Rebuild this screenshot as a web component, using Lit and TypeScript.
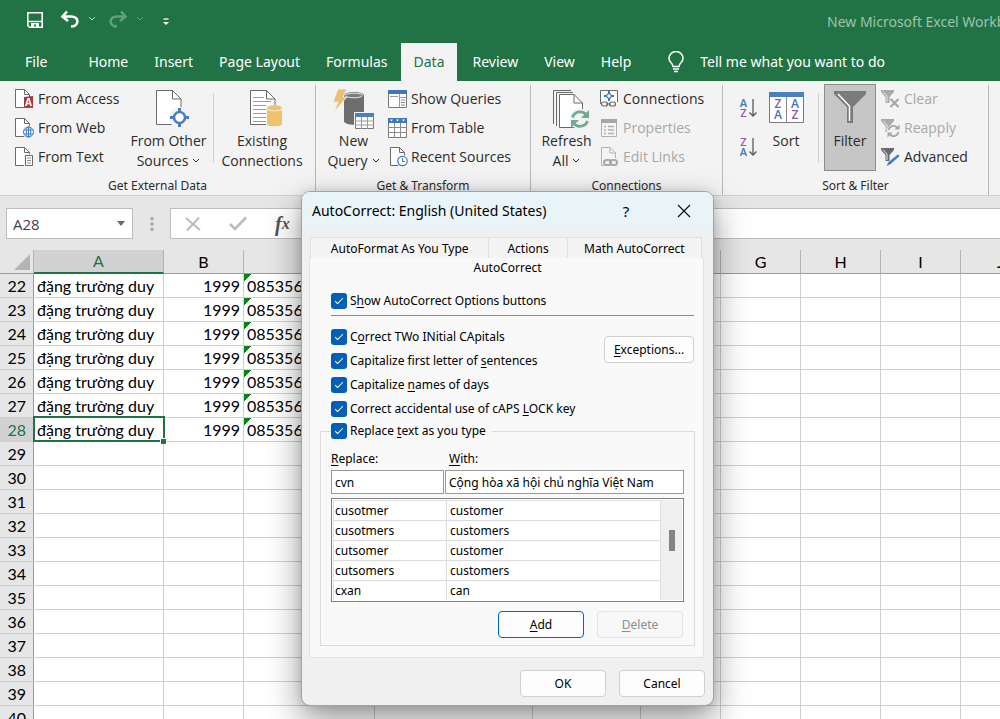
import { LitElement, html, svg, css, nothing } from "lit";
import { customElement } from "lit/decorators.js";
import { classMap } from "lit/directives/class-map.js";

/* ---------- icons ---------- */

const smallDoc = (stroke = "#6a6a6a") => svg`
  <path d="M.5 .5H9.5L14.500 5.500V18.500H.5z" fill="#fff" stroke=${stroke}/>
  <path d="M9.500 .5V5.500H14.500" fill="none" stroke=${stroke}/>`;

const bigDoc = svg`
  <path d="M.5 .5H16.500L25 9V34.500H.5z" fill="#fff" stroke="#6a6a6a"/>
  <path d="M16.500 .5V9H25" fill="none" stroke="#6a6a6a"/>`;

const small = (body: unknown) => html`<svg class="icon" width="19" height="20" viewBox="0 0 19 20" aria-hidden="true">${body}</svg>`;
const big = (w: number, body: unknown) => html`<svg class="icon" width=${w} height="40" viewBox="0 0 ${w} 40" aria-hidden="true">${body}</svg>`;

const funnel = (fill: string, shine: string) => svg`
  <path d="M0 1H13V3L8.500 8V14H4.500V8L0 3z" fill=${fill}/>
  <path d="M2 2.500L6 7V13" fill="none" stroke=${shine}/>`;

const icons = {
  access: small(svg`${smallDoc()}<path d="M9 8L18 7V19L9 18z" fill="#a4373a"/>
    <text x="13.500" y="16.500" font-size="10" font-weight="700" text-anchor="middle" fill="#fff">A</text>`),
  web: small(svg`${smallDoc()}<circle cx="13.500" cy="14" r="6.200" fill="#f3f3f3"/>
    <g fill="none" stroke="#3e7cc0"><circle cx="13.500" cy="14" r="5" fill="#fff"/>
    <ellipse cx="13.500" cy="14" rx="2.200" ry="5"/><path d="M9 12H18M9 16H18M13.500 9V19"/></g>`),
  text: small(svg`${smallDoc()}<path d="M9 7H19V20H9z" fill="#f3f3f3"/><path d="M10.500 8.500H17.500V18.500H10.500z" fill="#fff" stroke="#6a6a6a"/>
    <path d="M12 11H16M12 13.500H16M12 16H16" stroke="#8a8a8a"/>`),
  other: big(25, svg`${bigDoc}<circle cx="23.500" cy="27.500" r="10.500" fill="#f3f3f3"/>
    <circle cx="23.500" cy="27.500" r="5.500" fill="#fff" stroke="#4a80bd" stroke-width="2.600"/>
    <path d="M23.500 18V22M23.500 33V37M14 27.500H18M29 27.500H33" stroke="#4a80bd" stroke-width="3"/>`),
  existing: big(25, svg`${bigDoc}<path d="M3 7.500H14M3 11.500H21M3 15.500H21M3 19.500H16M3 23.500H16M3 27.500H16M3 31.500H16" stroke="#9a9a9a"/>
    <path d="M16 15H33V39H16z" fill="#f3f3f3"/>
    <path d="M17 18V34C17 37 32 37 32 34V18z" fill="#eec36f"/><ellipse cx="24.500" cy="18" rx="7.500" ry="2.800" fill="#eec36f"/>
    <path d="M17 18.500C18 21.500 31 21.500 32 18.500" fill="none" stroke="#fbe9c4" stroke-width="1.200"/>`),
  query: big(42, svg`<path d="M11 5V31C11 36 31 36 31 31V5z" fill="#6e6e6e"/><ellipse cx="21" cy="5.500" rx="10" ry="3.500" fill="#6e6e6e"/>
    <ellipse cx="21" cy="5.500" rx="8.500" ry="2.300" fill="#7d7d7d" stroke="#e8e8e8"/>
    <path d="M5 -1H14L10 7H14L1 22L5 12H0z" fill="#ecbf77" stroke="#f3f3f3" stroke-width=".8"/>
    <path d="M21 22H42V40H21z" fill="#f3f3f3"/><path d="M22.500 23.500H40.500V38.500H22.500z" fill="#fff" stroke="#7a7a7a"/>
    <path d="M22 23H41V27H22z" fill="#4a80bd"/><path d="M22 31H41M22 35H41M28.500 27V39M34.500 27V39" stroke="#9a9a9a"/>`),
  show: small(svg`<path d="M.5 1.500H18.500V18.500H.5z" fill="#fff" stroke="#7a7a7a"/><path d="M0 1H19V5H0z" fill="#3f77b8"/>
    <path d="M11.500 5V18M11.500 8.500H18M2 7.500H10" stroke="#9a9a9a"/><path d="M13 11H17M13 13.500H17M13 16H17" stroke="#8a8a8a"/>`),
  table: small(svg`<path d="M.5 .5H18.500V19.500H.5z" fill="#fff" stroke="#7a7a7a"/><path d="M0 0H19V5H0z" fill="#3f77b8"/>
    <path d="M2 1.500H5L3.500 3.500zM8 1.500H11L9.500 3.500zM14 1.500H17L15.500 3.500z" fill="#fff"/>
    <path d="M0 9.500H19M0 14.500H19M6.500 5V20M12.500 5V20" stroke="#8a8a8a"/>`),
  recent: small(svg`<g transform="translate(2 0)">${smallDoc()}</g><circle cx="14.500" cy="14" r="6" fill="#f3f3f3"/>
    <circle cx="14.500" cy="14" r="4.700" fill="#fff" stroke="#3f77b8" stroke-width="1.200"/><path d="M14.500 11V14.500H17" fill="none" stroke="#3f77b8"/>`),
  refresh: big(28, svg`<path d="M.5 34V.5H18" fill="none" stroke="#6a6a6a"/><path d="M3.500 36V2.500H20" fill="none" stroke="#6a6a6a"/>
    <path d="M6.500 4.500H21L29.500 13V37.500H6.500z" fill="#fff" stroke="#6a6a6a"/><path d="M21 4.500V13H29.500" fill="none" stroke="#6a6a6a"/>
    <circle cx="27" cy="29" r="10.500" fill="#f3f3f3"/>
    <g fill="none" stroke="#6fab90" stroke-width="2.800"><path d="M19.500 27.500A8 8 0 0 1 33.500 25"/><path d="M34.500 31A8 8 0 0 1 20.500 33"/></g>
    <path d="M36 20V28H28zM18 38V30H26z" fill="#6fab90"/>`),
  connections: small(svg`<path d="M.5 1.500H17.500V14.500H.5z" fill="#fff" stroke="#6a6a6a"/>
    <path d="M9 2V12M4 7H14" stroke="#3f77b8" stroke-width="2"/><path d="M9 4L12 7L9 10L6 7z" fill="#fff" stroke="#3f77b8" stroke-width="1.200"/>
    <path d="M1 13H18V19H1z" fill="#f3f3f3"/><rect x="1.500" y="13" width="6" height="4" rx="2" fill="none" stroke="#6a6a6a" stroke-width="1.200"/>
    <rect x="9.500" y="13" width="6" height="4" rx="2" fill="none" stroke="#6a6a6a" stroke-width="1.200"/><path d="M6 15H11" stroke="#6a6a6a"/>`),
  properties: small(svg`<path d="M1.500 1.500H16.500V18.500H1.500z" fill="#f6f3f6" stroke="#b5aeb3"/><path d="M1 1H17V5H1z" fill="#aaa3a8"/>
    <path d="M4 8.500H6M4 12H6M4 15.500H6M8 8.500H14M8 12H14M8 15.500H14" stroke="#b5aeb3" stroke-width="1.500"/>`),
  links: small(svg`<path d="M4.500 18.500H1.500V.5H10L15.500 6V11" fill="#f6f3f6" stroke="#b5b0b4"/><path d="M10 .5V6H15.500" fill="none" stroke="#b5b0b4"/>
    <g fill="none" stroke="#aaa6a9" stroke-width="2"><rect x="4" y="13" width="7" height="5" rx="2.500"/><rect x="10" y="13" width="7" height="5" rx="2.500"/></g>`),
  filter: big(32, svg`<path d="M0 2H32V5L19 18V34H13V18L0 5z" fill="#7b7b7b"/><path d="M4 5L15.500 17V32" fill="none" stroke="#fff" stroke-width="1.500"/>`),
  clear: small(svg`${funnel("#aaa", "#e8e8e8")}<path d="M9.500 10L17.500 18M17.500 10L9.500 18" stroke="#a6a6a6" stroke-width="2.200"/>`),
  reapply: small(svg`${funnel("#aaa", "#e8e8e8")}<circle cx="12.500" cy="13" r="6.500" fill="#f3f3f3"/>
    <g fill="none" stroke="#a6a6a6" stroke-width="1.800"><path d="M7.500 12A5 5 0 0 1 16 9.500"/><path d="M17.500 14A5 5 0 0 1 9 16.500"/></g>
    <path d="M18.500 6.500V11.500H13.500zM6.500 19.500V14.500H11.500z" fill="#a6a6a6"/>`),
  advanced: small(svg`${funnel("#6a6a6a", "#e8e8e8")}<path d="M17 7L19 9L9.500 17.500L5 19.500L7 15z" fill="#3f7cc0" stroke="#f3f3f3" stroke-width=".7"/>`),
};

const sortGlyph = (top: string, bottom: string) => html`
  <svg class="icon" width="19" height="24" viewBox="0 0 19 24" aria-hidden="true">
    <text x="4.500" y="10" font-size="11" font-weight="600" text-anchor="middle" fill=${top === "A" ? "#3f77b8" : "#8e58ab"}>${top}</text>
    <text x="4.500" y="20" font-size="11" font-weight="600" text-anchor="middle" fill=${bottom === "A" ? "#3f77b8" : "#8e58ab"}>${bottom}</text>
    <path d="M14 2V19M10.500 15.500L14 19L17.500 15.500" fill="none" stroke="#5a5a5a" stroke-width="1.300"/>
  </svg>`;

const sortBig = big(35, svg`<path d="M.5 2.500H34.500V32.500H.5z" fill="#fff" stroke="#7a7a7a"/><path d="M0 2H35V7H0z" fill="#4a80bd"/>
  <path d="M17.500 7V32" stroke="#8a8a8a"/>
  <g font-size="12" font-weight="600" text-anchor="middle"><text x="9" y="18" fill="#8e58ab">Z</text><text x="9" y="29" fill="#3f77b8">A</text>
  <text x="26" y="18" fill="#3f77b8">A</text><text x="26" y="29" fill="#8e58ab">Z</text></g>`);

const chevron = html`<svg class="chevron" width="8" height="6" viewBox="0 0 8 6" aria-hidden="true"><path d="M1 1L4 4L7 1" fill="none" stroke="currentColor"/></svg>`;

/* ---------- ribbon ---------- */

@customElement("excel-ribbon")
export class ExcelRibbon extends LitElement {
  static styles = css`
    :host { display: block; font: 14px/20px "Open Sans", "Noto Sans", sans-serif; color: #2b2b2b; }
    button { font: inherit; color: inherit; background: none; border: 0; padding: 0; margin: 0; white-space: nowrap; }
    .icon { display: block; flex: none; overflow: visible; }
    .green { background: #217346; color: #fff; font-family: "Noto Sans", "Open Sans", sans-serif; }
    .quick { display: flex; align-items: center; height: 43px; overflow: hidden; }
    .quick button { display: flex; }
    .tools { display: flex; align-items: center; flex: 1; padding: 0 0 3px 27px; }
    .tools .drop { padding: 0 13px 0 5px; opacity: .7; }
    .tools .off { opacity: .3; }
    .tools .more { margin: 3px 0 0 6px; }
    .title { flex: none; width: 173px; color: #9cc4ac; white-space: nowrap; }
    .tabs { display: flex; height: 38px; padding-left: 12px; }
    .tab { padding: 0 13px; }
    .tab.file { margin-right: 15px; }
    .tab.active { background: #f3f3f3; color: #217346; margin-right: 2px; }
    .tell { display: flex; align-items: center; gap: 16px; padding-left: 24px; }
    .body { display: flex; height: 114px; background: #f3f3f3; border-bottom: 1px solid #cfcfcf; }
    .group { flex: none; display: flex; flex-direction: column; justify-content: space-between; margin-top: 4px; border-right: 1px solid #b9b9b9; }
    .row { display: flex; align-items: flex-start; }
    .caption { font: 12px/18px "Noto Sans", sans-serif; text-align: center; }
    .list { display: flex; flex-direction: column; margin-top: -1px; }
    .item { display: flex; align-items: center; gap: 4px; height: 29px; text-align: left; }
    .item:disabled { color: #a8a8a8; }
    .tall { display: flex; flex-direction: column; align-items: center; padding-top: 5px; }
    .tall .label { padding-top: 1px; }
    .chevron { padding: 0 0 2px 4px; }
    .rule { width: 1px; height: 70px; margin-top: 8px; background: #cfcfcf; }
    .w-other { width: 89px; }
    .w-exist { width: 96px; }
    .w-query { width: 69px; }
    .w-refresh { width: 67px; }
    .w-sort { width: 48px; }
    .external { width: 315px; }
    .external .list { padding-left: 15px; width: 109px; }
    .transform { width: 214px; }
    .transform .row { padding-left: 3px; }
    .connect { width: 191px; }
    .connect .row { padding-left: 2px; }
    .sort { width: 265px; }
    .sort .row { padding-left: 16px; }
    .pair { display: flex; flex-direction: column; gap: 15px; padding: 12px 4px 0 0; }
    .sort .rule { margin-left: 8px; }
    .filter { box-sizing: border-box; width: 52px; height: 87px; margin: -1px 5px 0; padding-top: 4px; background: #c6c6c6; border: 1px solid #8c8c8c; }
    .filter .label { padding-top: 2px; }
  `;

  private item(icon: unknown, text: string, disabled = false) {
    return html`<button class="item" ?disabled=${disabled}>${icon}<span>${text}</span></button>`;
  }

  private tall(icon: unknown, cls: string, one: string, two: string | null = null, drop = false) {
    return html`<button class="tall ${cls}">${icon}<span class="label">${one}${two ? html`<br />${two}` : nothing}${drop ? chevron : nothing}</span></button>`;
  }

  render() {
    return html`
      <header class="green">
        <div class="quick">
          <div class="tools">
            <button aria-label="Save"><svg width="16" height="16" viewBox="0 0 16 16"><path d="M.8 .8H15.200V15.200H2.500L.8 13.500z" fill="none" stroke="#fff" stroke-width="1.600"/><path d="M1 9.500H15" stroke="#fff" stroke-width="1.400"/><path d="M4 11H12V15H9V12.500H7V15H4z" fill="#fff"/></svg></button>
            <button aria-label="Undo"><svg class="icon" width="36" height="18" viewBox="-18 0 36 18"><path d="M6 .5L1.500 5.500L7 10M2 5.500H10C19 5.500 18 15.500 10 15.500" fill="none" stroke="#fff" stroke-width="2.600"/></svg></button>
            <button aria-label="Undo list" class="drop">${chevron}</button>
            <button aria-label="Redo" class="off"><svg width="18" height="18" viewBox="0 0 18 18"><path d="M12 .5L16.500 5.500L11 10M16 5.500H8C-1 5.500 0 15.500 8 15.500" fill="none" stroke="#fff" stroke-width="2.600"/></svg></button>
            <button aria-label="Redo list" class="drop off">${chevron}</button>
            <button aria-label="Customize Quick Access Toolbar" class="more"><svg width="6" height="8" viewBox="0 0 6 8"><path d="M.5 1H5.500" stroke="#fff" stroke-width="1.300"/><path d="M0 4H6L3 7z" fill="#fff"/></svg></button>
          </div>
          <div class="title">New Microsoft Excel Workbook</div>
        </div>
        <nav class="tabs">
          ${["File", "Home", "Insert", "Page Layout", "Formulas", "Data", "Review", "View", "Help"].map(
            (t) => html`<button class=${classMap({ tab: true, file: t === "File", active: t === "Data" })}>${t}</button>`
          )}
          <button class="tell">
            <svg width="16" height="22" viewBox="0 0 16 22" aria-hidden="true"><path d="M5 15.500C5 12 1 11.500 1 7.500A7 7 0 0 1 15 7.500C15 11.500 11 12 11 15.500z" fill="none" stroke="#fff" stroke-width="1.500"/><path d="M5 18H11M6 20.500H10" stroke="#fff" stroke-width="1.500"/></svg>
            <span>Tell me what you want to do</span>
          </button>
        </nav>
      </header>
      <div class="body">
        <section class="group external">
          <div class="row">
            <div class="list">${this.item(icons.access, "From Access")}${this.item(icons.web, "From Web")}${this.item(icons.text, "From Text")}</div>
            ${this.tall(icons.other, "w-other", "From Other", "Sources", true)}
            <div class="rule"></div>
            ${this.tall(icons.existing, "w-exist", "Existing", "Connections")}
          </div>
          <div class="caption">Get External Data</div>
        </section>
        <section class="group transform">
          <div class="row">
            ${this.tall(icons.query, "w-query", "New", "Query", true)}
            <div class="list">${this.item(icons.show, "Show Queries")}${this.item(icons.table, "From Table")}${this.item(icons.recent, "Recent Sources")}</div>
          </div>
          <div class="caption">Get &amp; Transform</div>
        </section>
        <section class="group connect">
          <div class="row">
            ${this.tall(icons.refresh, "w-refresh", "Refresh", "All", true)}
            <div class="list">${this.item(icons.connections, "Connections")}${this.item(icons.properties, "Properties", true)}${this.item(icons.links, "Edit Links", true)}</div>
          </div>
          <div class="caption">Connections</div>
        </section>
        <section class="group sort">
          <div class="row">
            <div class="pair">
              <button aria-label="Sort A to Z">${sortGlyph("A", "Z")}</button>
              <button aria-label="Sort Z to A">${sortGlyph("Z", "A")}</button>
            </div>
            ${this.tall(sortBig, "w-sort", "Sort")}
            <div class="rule"></div>
            ${this.tall(icons.filter, "filter", "Filter")}
            <div class="list">${this.item(icons.clear, "Clear", true)}${this.item(icons.reapply, "Reapply", true)}${this.item(icons.advanced, "Advanced")}</div>
          </div>
          <div class="caption">Sort &amp; Filter</div>
        </section>
      </div>`;
  }
}

/* ---------- formula bar and grid ---------- */

const columns = [
  { name: "A", width: 130 }, { name: "B", width: 80 }, { name: "C", width: 131 }, { name: "D", width: 158 }, { name: "E", width: 108 },
  { name: "F", width: 80 }, { name: "G", width: 80 }, { name: "H", width: 80 }, { name: "I", width: 80 }, { name: "J", width: 80 },
];
const rows = Array.from({ length: 19 }, (_, i) => 22 + i);
const filled = ["đặng trường duy", "1999", "0853567"];

@customElement("excel-sheet")
export class ExcelSheet extends LitElement {
  static styles = css`
    :host { display: block; flex: 1; min-height: 0; overflow: hidden; background: #e6e6e6; color: #000; }
    .bar { display: flex; height: 31px; padding: 12px 0 11px 6px; }
    .name { box-sizing: border-box; display: flex; align-items: center; width: 127px; background: #fff; border: 1px solid #bdbdbd; }
    input { font: 15px/20px "Open Sans", "Noto Sans", sans-serif; color: #444; border: 0; background: none; min-width: 0; flex: 1; padding: 0 6px; outline: 0; }
    button { border: 0; background: none; padding: 0; display: flex; }
    .name button { padding-right: 7px; }
    .dots { width: 37px; display: flex; align-items: center; justify-content: center; }
    .formula { flex: 1; display: flex; align-items: center; background: #fff; border: solid #bdbdbd; border-width: 1px 0 1px 1px; padding-left: 14px; gap: 28px; }
    .fx { font: italic 700 20px/20px "Liberation Serif", serif; color: #555; }
    .fx small { font-size: 16px; }
    table { border-collapse: separate; border-spacing: 0; table-layout: fixed; width: 1041px; font: 16px/23px Lato, "Noto Sans", sans-serif; }
    .numbers { width: 34px; }
    th, td { padding: 0; height: 23px; white-space: nowrap; overflow: hidden; font-weight: 400; border: solid #cfcfcf; border-width: 0 1px 1px 0; }
    td { background: #fff; }
    thead th { border-color: #9b9b9b; border-right-color: #b4b4b4; }
    tbody th { background: #e6e6e6; border-right-color: #9b9b9b; text-align: right; padding-right: 7px; font-size: 16px; }
    .corner svg { display: block; margin-left: auto; padding: 0 3px 0 0; }
    thead .picked { background: #d2d2d2; color: #217346; border-bottom: 2px solid #217346; height: 22px; line-height: 22px; }
    tbody .picked { background: #d2d2d2; color: #217346; }
    .word { padding-left: 3px; }
    .num { text-align: right; padding-right: 3px; }
    .flag { padding-left: 3px; background: linear-gradient(135deg, #11801c 5px, transparent 5px) #fff; }
    .current { position: relative; overflow: visible; }
    .current::before { content: ""; position: absolute; inset: -2px -2px -1px -1px; border: 2px solid #217346; }
    .current::after { content: ""; position: absolute; right: -3px; bottom: -3px; width: 5px; height: 5px; background: #217346; border: solid #fff; border-width: 1px 0 0 1px; }
  `;

  render() {
    return html`
      <div class="bar">
        <div class="name">
          <input aria-label="Name Box" .value=${"A28"} />
          <button aria-label="Name list"><svg width="8" height="5" viewBox="0 0 8 5"><path d="M0 0H8L4 5z" fill="#6a6a6a"/></svg></button>
        </div>
        <div class="dots"><svg width="4" height="14" viewBox="0 0 4 14"><path d="M.5 0H3.500V3H.5zM.5 5.500H3.500V8.500H.5zM.5 11H3.500V14H.5z" fill="#a8a8a8"/></svg></div>
        <div class="formula">
          <button aria-label="Cancel"><svg width="16" height="16" viewBox="0 0 16 16"><path d="M1 2L15 14M14 1.500L2 14.500" stroke="#bcbcbc" stroke-width="2"/></svg></button>
          <button aria-label="Enter"><svg width="18" height="16" viewBox="0 0 18 16"><path d="M1 8L6 13L17 1.500" fill="none" stroke="#bcbcbc" stroke-width="2.600"/></svg></button>
          <button class="fx" aria-label="Insert Function">f<small>x</small></button>
          <input aria-label="Formula" />
        </div>
      </div>
      <table>
        <colgroup><col class="numbers" />${columns.map((c) => html`<col style="width:${c.width}px" />`)}</colgroup>
        <thead>
          <tr>
            <th class="corner"><svg width="16" height="16" viewBox="0 0 16 16"><path d="M16 0V16H0z" fill="#b4b4b4"/></svg></th>
            ${columns.map((c) => html`<th class=${classMap({ picked: c.name === "A" })}>${c.name}</th>`)}
          </tr>
        </thead>
        <tbody>
          ${rows.map((r) => {
            const has = r <= 28;
            return html`<tr>
              <th class=${classMap({ picked: r === 28 })}>${r}</th>
              ${columns.map((_, i) => html`<td class=${classMap({ word: has && i === 0, num: has && i === 1, flag: has && i === 2, current: r === 28 && i === 0 })}>${has ? filled[i] : nothing}</td>`)}
            </tr>`;
          })}
        </tbody>
      </table>`;
  }
}

/* ---------- AutoCorrect dialog ---------- */

const pairs = [["cusotmer", "customer"], ["cusotmers", "customers"], ["cutsomer", "customer"], ["cutsomers", "customers"], ["cxan", "can"]];

@customElement("autocorrect-dialog")
export class AutocorrectDialog extends LitElement {
  static styles = css`
    :host { box-sizing: border-box; display: block; width: 413px; border: 1px solid #a3a3a3; border-radius: 9px; background: #f0f0f0; overflow: hidden;
      box-shadow: 0 14px 34px rgba(0, 0, 0, .42), 0 0 10px rgba(0, 0, 0, .12); font: 12px/18px "Noto Sans", "Open Sans", sans-serif; color: #000; }
    button { font: inherit; color: inherit; }
    u { text-underline-offset: 2px; }
    .head { display: flex; align-items: center; height: 37px; background: #e9f4f8; padding-left: 10px; }
    .head h1 { flex: 1; margin: 0; font-size: 14px; font-weight: 400; }
    .head button { display: flex; justify-content: center; width: 58px; border: 0; background: none; padding: 0; font-size: 15px; }
    .content { padding: 8px 8px 8px 7px; }
    .tabs { display: grid; grid-template-columns: 179fr 78fr 134fr; margin: 0 3px 0 1px; height: 20px; }
    .tabs button { background: #f4f4f4; border: solid #e0e0e0; border-width: 1px 1px 0 0; padding: 2px 0 0; white-space: nowrap; }
    .tabs button:first-child { border-left-width: 1px; }
    .page { background: #f9f9f9; border: 1px solid #e2e2e2; margin-right: 1px; padding: 0 8px 11px 10px; }
    .current { display: block; width: 100%; border: 0; background: none; padding: 0; line-height: 20px; }
    .inner { padding: 0 1px 0 11px; }
    .check { display: flex; align-items: center; gap: 3px; height: 24px; }
    .check input { appearance: none; flex: none; display: grid; place-items: center; width: 16px; height: 16px; margin: 0; border-radius: 3px; background: #005fb8; }
    .check input::before { content: ""; width: 7px; height: 3px; margin-top: -3px; border: solid #fff; border-width: 0 0 1px 1px; transform: rotate(-45deg); }
    .first { margin-top: 11px; padding-bottom: 2px; border-bottom: 1px solid #8c8c8c; margin-bottom: 9px; }
    .options { display: flex; justify-content: space-between; }
    .push { box-sizing: border-box; width: 86px; height: 27px; padding: 0; background: #fdfdfd; border: 1px solid #d0d0d0; border-radius: 4px; }
    .exceptions { width: 90px; margin-top: 11px; }
    fieldset { margin: 0; padding: 8px 10px 7px; border: 1px solid #dcdcdc; min-width: 0; }
    legend { padding: 0 6px 0 0; }
    legend .check { height: 20px; }
    .fields { display: grid; grid-template-columns: 113px 1fr; column-gap: 1px; }
    .fields label { line-height: 20px; padding: 0 0 1px 0; }
    .fields label + label { padding-left: 4px; }
    .fields input { box-sizing: border-box; width: 100%; min-width: 0; height: 24px; font: inherit; padding: 0 3px; border: 1px solid #9a9a9a; background: #fff; outline: 0; }
    .entries { display: flex; box-sizing: border-box; height: 104px; margin-top: 4px; padding: 1px; border: 1px solid #7c8087; background: #fff; overflow: hidden; }
    table { flex: 1; border-collapse: separate; border-spacing: 0; table-layout: fixed; border-left: 1px solid #e0e0e0; border-right: 1px solid #e0e0e0; }
    td { height: 19px; line-height: 18px; padding: 0 0 0 3px; border-top: 1px solid #dcdcdc; }
    td:first-child { width: 111px; border-right: 1px solid #dcdcdc; padding-left: 1px; }
    .scroll { width: 21px; background: #f0f0f0; display: flex; justify-content: center; align-items: flex-start; }
    .thumb { width: 6px; height: 21px; margin-top: 30px; background: #858585; }
    .actions { display: flex; justify-content: flex-end; gap: 13px; margin-top: 9px; }
    fieldset .actions { padding-right: 1px; }
    .add { border-color: #0067c0; }
    .push:disabled { color: #8c8c8c; background: #f8f8f8; border-color: #e4e4e4; }
    .foot { margin-top: 12px; }
  `;

  private check(label: unknown, id: string) {
    return html`<div class="check"><input type="checkbox" id=${id} checked /><label for=${id}>${label}</label></div>`;
  }

  render() {
    return html`
      <div class="head">
        <h1>AutoCorrect: English (United States)</h1>
        <button aria-label="Help">?</button>
        <button aria-label="Close"><svg width="14" height="14" viewBox="0 0 14 14"><path d="M1 1L13 13M13 1L1 13" stroke="#111" stroke-width="1.200"/></svg></button>
      </div>
      <div class="content">
        <div class="tabs"><button>AutoFormat As You Type</button><button>Actions</button><button>Math AutoCorrect</button></div>
        <div class="page">
          <button class="current">AutoCorrect</button>
          <div class="inner">
            <div class="first">${this.check(html`S<u>h</u>ow AutoCorrect Options buttons`, "show")}</div>
            <div class="options">
              <div>
                ${this.check(html`C<u>o</u>rrect TWo INitial CApitals`, "two")}
                ${this.check(html`Capitalize first letter of <u>s</u>entences`, "first")}
                ${this.check(html`Capitalize <u>n</u>ames of days`, "days")}
                ${this.check(html`Correct accidental use of cAPS <u>L</u>OCK key`, "caps")}
              </div>
              <button class="push exceptions"><u>E</u>xceptions...</button>
            </div>
          </div>
          <fieldset>
            <legend>${this.check(html`Replace <u>t</u>ext as you type`, "replace-on")}</legend>
            <div class="fields">
              <label for="from"><u>R</u>eplace:</label><label for="to"><u>W</u>ith:</label>
              <input id="from" .value=${"cvn"} /><input id="to" .value=${"Cộng hòa xã hội chủ nghĩa Việt Nam"} />
            </div>
            <div class="entries">
              <table><tbody>${pairs.map((p) => html`<tr><td>${p[0]}</td><td>${p[1]}</td></tr>`)}</tbody></table>
              <div class="scroll"><div class="thumb"></div></div>
            </div>
            <div class="actions"><button class="push add"><u>A</u>dd</button><button class="push" disabled><u>D</u>elete</button></div>
          </fieldset>
        </div>
        <div class="actions foot"><button class="push">OK</button><button class="push">Cancel</button></div>
      </div>`;
  }
}

@customElement("app-root")
export class AppRoot extends LitElement {
  static styles = css`
    :host { position: relative; display: flex; flex-direction: column; height: 100vh; overflow: hidden; }
    .dialog { position: absolute; left: 301px; top: 191px; }
  `;

  render() {
    return html`
      <excel-ribbon></excel-ribbon>
      <excel-sheet></excel-sheet>
      <autocorrect-dialog class="dialog" role="dialog" aria-label="AutoCorrect"></autocorrect-dialog>`;
  }
}
